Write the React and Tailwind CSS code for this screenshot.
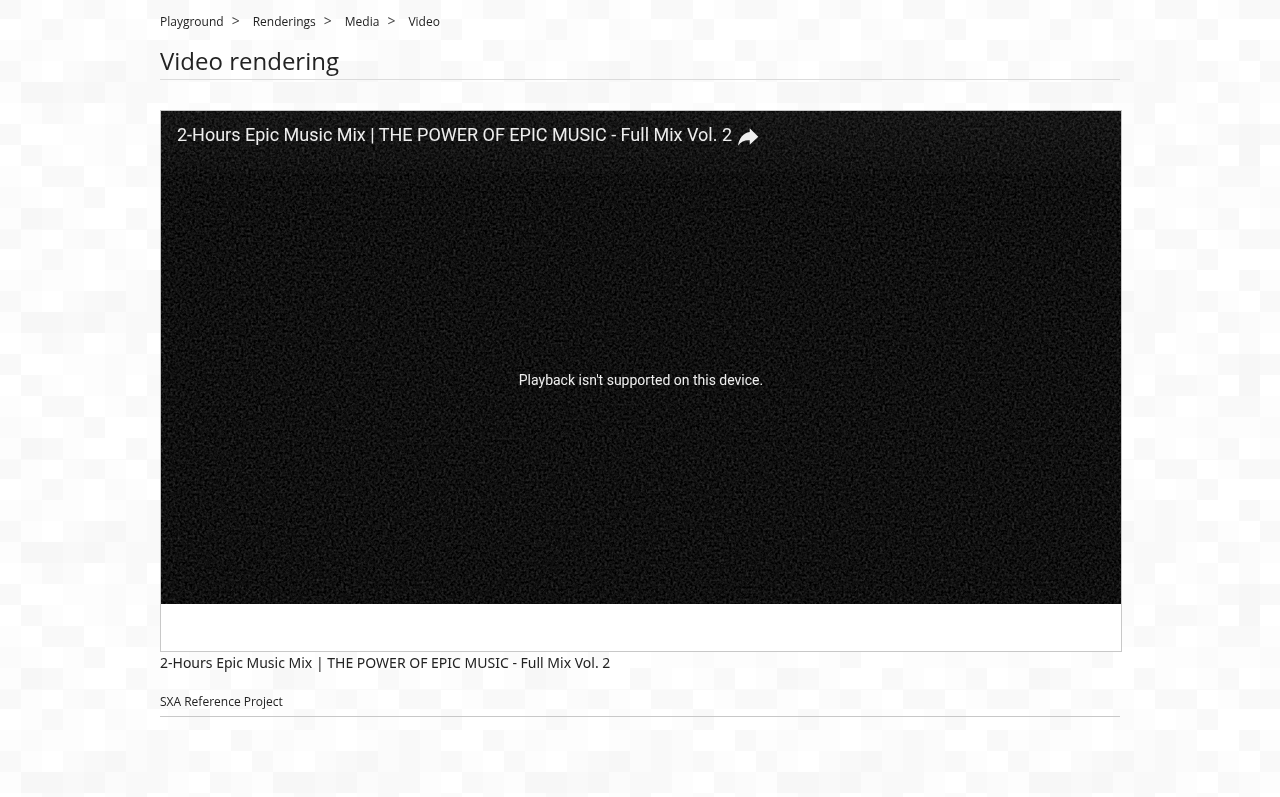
const SHADES = ["#ffffff", "#fdfdfd", "#fbfbfb", "#f9f9f9", "#f7f7f7"];

const TILE_ROWS = [
  "310231033013",
  "013102101300",
  "121101232003",
  "310234232310",
  "144342331032",
  "013201301202",
  "300112120134",
  "031012033204",
  "103301320133",
  "210130011211",
  "143100310130",
];

const CRUMBS = ["Playground", "Renderings", "Media"];

const TITLE = "2-Hours Epic Music Mix | THE POWER OF EPIC MUSIC - Full Mix Vol. 2";

function MosaicBackground() {
  return (
    <svg className="fixed inset-0 -z-10 h-full w-full" aria-hidden="true">
      <defs>
        <pattern id="mosaic" width="252" height="230" patternUnits="userSpaceOnUse">
          {TILE_ROWS.map((row, r) =>
            row.split("").map((shade, c) => (
              <rect
                key={`${r}-${c}`}
                x={c * 21}
                y={r === 0 ? 0 : r * 21 - 2}
                width="21"
                height={r === 0 ? 19 : 21}
                fill={SHADES[Number(shade)]}
              />
            ))
          )}
          <rect y="229" width="252" height="1" fill="#fafafa" />
        </pattern>
      </defs>
      <rect width="100%" height="100%" fill="url(#mosaic)" />
    </svg>
  );
}

function StaticNoise() {
  return (
    <svg className="absolute inset-0 h-full w-full" aria-hidden="true">
      <filter id="static" x="0" y="0" width="100%" height="100%" colorInterpolationFilters="sRGB">
        <feTurbulence type="fractalNoise" baseFrequency="0.41" numOctaves="2" seed="4" />
        <feColorMatrix values="0.2 0.2 0 0 -0.138  0.2 0.2 0 0 -0.138  0.2 0.2 0 0 -0.138  0 0 0 0 1" />
      </filter>
      <rect width="100%" height="100%" filter="url(#static)" />
    </svg>
  );
}

function VideoPlayer() {
  return (
    <section
      aria-label="Video player"
      className="box-content flex aspect-video w-full flex-col border border-[#c8c8c8] bg-white font-['Roboto',sans-serif] text-[#eeeeee]"
    >
      <div className="relative flex grow flex-col bg-[#0e0e0e]">
        <StaticNoise />
        <div className="relative flex h-[62px] items-start gap-1 bg-linear-to-b from-white/3 to-white/1 px-4 pt-3">
          <a href="#video" className="text-lg leading-6">
            {TITLE}
          </a>
          <button type="button" aria-label="Share" className="pt-1">
            <svg className="h-6 w-6" viewBox="0 0 24 24" fill="#eeeeee">
              <path d="M13.7 1.3 L22.3 9.7 L13.7 17.7 V13.2 C9 12.8 5 14.5 2 18.7 C3 11 7.5 6 13.7 5 Z" />
            </svg>
          </button>
        </div>
        <p className="relative flex grow items-center justify-center pb-[18px] text-sm">
          Playback isn't supported on this device.
        </p>
      </div>
      <div className="h-[47px]" />
    </section>
  );
}

export default function App() {
  return (
    <div className="isolate min-h-screen font-['Open_Sans',sans-serif] text-[#222222]">
      <MosaicBackground />
      <div className="mx-auto max-w-[960px] pt-3">
        <nav aria-label="Breadcrumb">
          <ol className="flex text-xs leading-5">
            {CRUMBS.map((crumb) => (
              <li key={crumb} className="flex">
                <a href="#crumb">{crumb}</a>
                <span className="pr-[13px] pl-2 text-sm leading-[18px] text-[#444444]" aria-hidden="true">
                  &gt;
                </span>
              </li>
            ))}
            <li>
              <a href="#video">Video</a>
            </li>
          </ol>
        </nav>
        <main>
          <h1 className="mt-3 mb-[30px] border-b border-[#dbdbdb] pb-0.5 text-2xl leading-[33px]">
            Video rendering
          </h1>
          <VideoPlayer />
          <p className="font-['Noto_Sans',sans-serif] text-sm leading-[22px]">{TITLE}</p>
        </main>
        <footer className="mt-4 border-b border-[#c8c8c8] pt-1 pb-1.5 text-xs leading-4">
          SXA Reference Project
        </footer>
      </div>
    </div>
  );
}
